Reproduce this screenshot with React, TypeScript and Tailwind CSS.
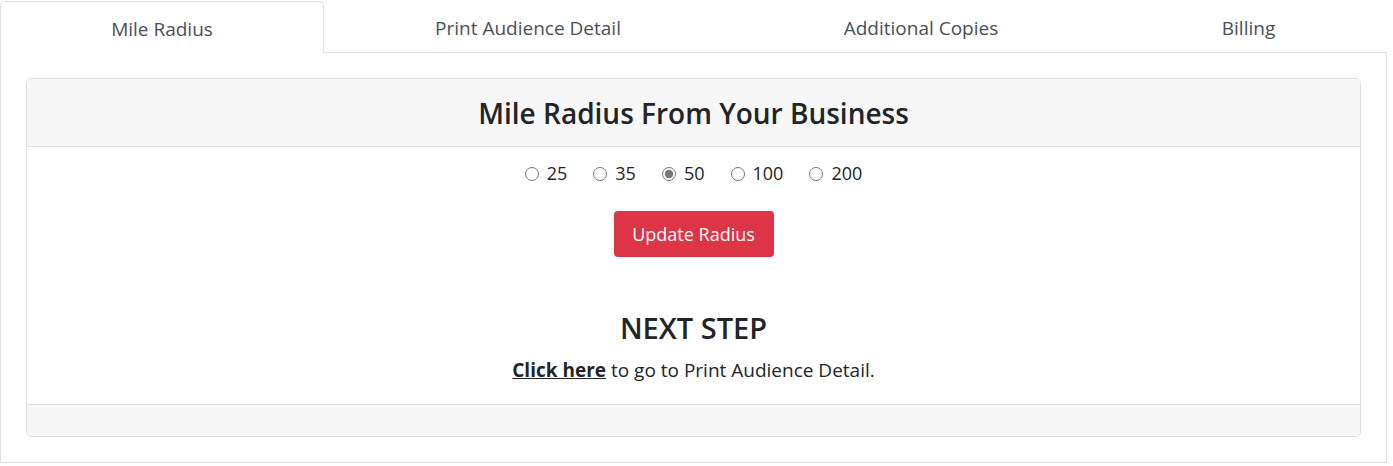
import { useState } from "react";

const tabs = [
  { label: "Mile Radius", w: "w-[324px]" },
  { label: "Print Audience Detail", w: "w-[408px]" },
  { label: "Additional Copies", w: "w-[378px]" },
  { label: "Billing", w: "flex-1" },
];

const radii = ["25", "35", "50", "100", "200"];

export default function App() {
  const [radius, setRadius] = useState("50");

  return (
    <div className="w-[1387px] bg-white text-[#212529] font-['Open_Sans',sans-serif]">
      {/* tabs */}
      <ul className="flex">
        {tabs.map((t, i) =>
          i === 0 ? (
            <li
              key={t.label}
              className={`${t.w} h-[52px] mt-px pt-[3px] flex items-center justify-center border border-b-0 border-[#dee2e6] rounded-t-[5px] text-[19px] text-[#495057]`}
            >
              {t.label}
            </li>
          ) : (
            <li
              key={t.label}
              className={`${t.w} h-[52px] mt-px pt-[3px] flex items-center justify-center border-b border-[#dee2e6] text-[19px] text-[#495057]`}
            >
              {t.label}
            </li>
          )
        )}
      </ul>

      {/* tab content */}
      <div className="border border-t-0 border-[#dee2e6] px-[25px] pt-[25px] pb-[25px]">
        <div className="border border-[#dedede] rounded-[5px] overflow-hidden">
          <div className="h-[68px] bg-[#f7f7f7] border-b border-[#dedede] flex items-center justify-center">
            <h2 className="text-[28px] font-semibold leading-none">Mile Radius From Your Business</h2>
          </div>

          <div className="h-[257px] flex flex-col items-center pt-[13px]">
            <div className="flex items-center gap-[26px] text-[18px]">
              {radii.map((r) => (
                <label key={r} className="flex items-center gap-[8px]">
                  <input
                    type="radio"
                    name="radius"
                    value={r}
                    checked={radius === r}
                    onChange={() => setRadius(r)}
                    className="w-[14px] h-[14px] m-0 accent-[#777]"
                  />
                  <span>{r}</span>
                </label>
              ))}
            </div>

            <button className="mt-[24px] w-[160px] h-[46px] rounded-[4px] bg-[#dc3545] text-white text-[18px]">
              Update Radius
            </button>

            <h3 className="mt-[56px] text-[29px] font-semibold leading-none">NEXT STEP</h3>
            <p className="mt-[14px] text-[19px]">
              <a href="#" className="font-bold underline">Click here</a> to go to Print Audience Detail.
            </p>
          </div>

          <div className="h-[32px] bg-[#f7f7f7] border-t border-[#dedede]" />
        </div>
      </div>
    </div>
  );
}
